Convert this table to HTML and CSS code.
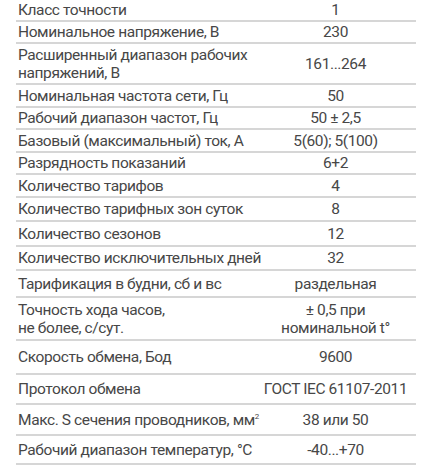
FILE: index.html
```html
<!DOCTYPE html>
<html lang="ru">
<head>
<meta charset="utf-8">
<title>Технические характеристики</title>
<link rel="stylesheet" href="styles.css">
</head>
<body>
<div class="spec">
  <div class="k"><span>Класс точности</span></div><div class="v"><span>1</span></div>
  <div class="k"><span>Номинальное напряжение, В</span></div><div class="v"><span>230</span></div>
  <div class="k"><span>Расширенный диапазон рабочих<br>напряжений, В</span></div><div class="v"><span>161...264</span></div>
  <div class="k"><span>Номинальная частота сети, Гц</span></div><div class="v"><span>50</span></div>
  <div class="k"><span>Рабочий диапазон частот, Гц</span></div><div class="v"><span>50 ± 2,5</span></div>
  <div class="k"><span>Базовый (максимальный) ток, А</span></div><div class="v"><span>5(60); 5(100)</span></div>
  <div class="k"><span>Разрядность показаний</span></div><div class="v"><span>6+2</span></div>
  <div class="k"><span>Количество тарифов</span></div><div class="v"><span>4</span></div>
  <div class="k"><span>Количество тарифных зон суток</span></div><div class="v"><span>8</span></div>
  <div class="k"><span>Количество сезонов</span></div><div class="v"><span>12</span></div>
  <div class="k"><span>Количество исключительных дней</span></div><div class="v"><span>32</span></div>
  <div class="k"><span>Тарификация в будни, сб и вс</span></div><div class="v"><span>раздельная</span></div>
  <div class="k"><span>Точность хода часов,<br>не более, с/сут.</span></div><div class="v"><span>± 0,5 при<br>номинальной t°</span></div>
  <div class="k"><span>Скорость обмена, Бод</span></div><div class="v"><span>9600</span></div>
  <div class="k"><span>Протокол обмена</span></div><div class="v"><span>ГОСТ IEC 61107-2011</span></div>
  <div class="k"><span>Макс. S сечения проводников, мм<sup>2</sup></span></div><div class="v"><span>38 или 50</span></div>
  <div class="k"><span>Рабочий диапазон температур, °С</span></div><div class="v"><span>-40...+70</span></div>
</div>
</body>
</html>
```

FILE: styles.css
```css
html, body {
  margin: 0;
  padding: 0;
  background: #ffffff;
}

body {
  padding-left: 16px;
  font-family: Roboto, "Liberation Sans", sans-serif;
  font-size: 15.5px;
  letter-spacing: -0.4px;
  color: #474747;
}

.spec {
  width: 400px;
  display: grid;
  grid-template-columns: 239px 161px;
  grid-template-rows: 22px 22px 41px 23px 22px 23px 22px 23px 24px 25px 24px 27px 43px 34px 30px 31px 29px;
}

.k,
.v {
  display: flex;
  align-items: center;
  border-bottom: 2px solid #d6d6d6;
  line-height: 18px;
  white-space: nowrap;
}

.k {
  padding-left: 2px;
}

.v {
  justify-content: center;
  text-align: center;
}

sup {
  font-size: 8px;
  line-height: 0;
  vertical-align: 6px;
}
```
